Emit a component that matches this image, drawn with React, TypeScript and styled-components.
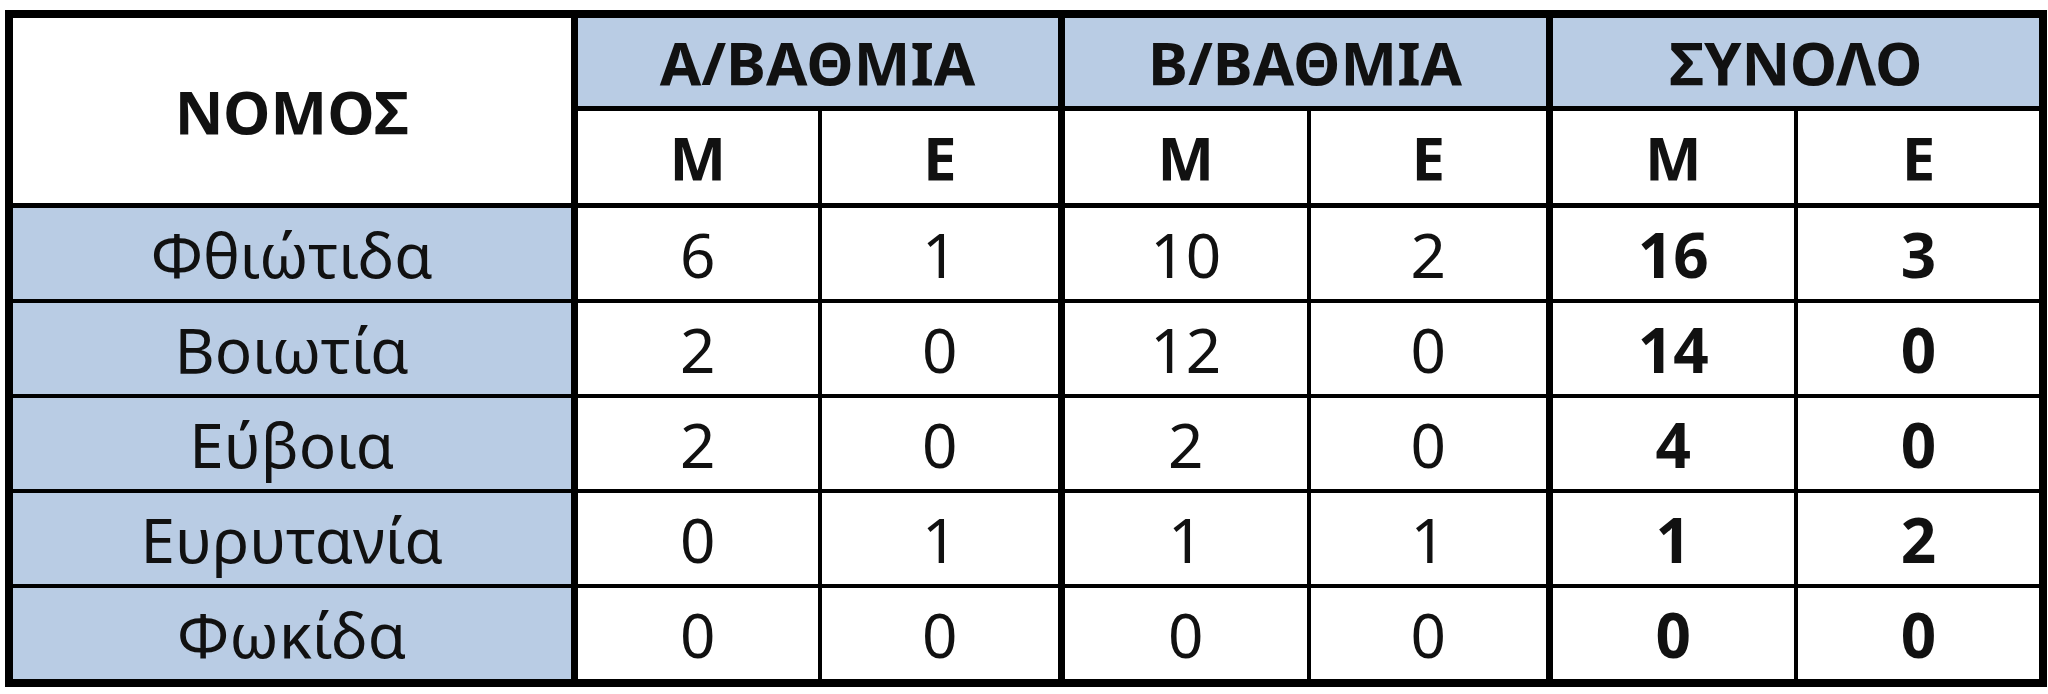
import React from 'react'
import styled, { createGlobalStyle } from 'styled-components'

const GlobalStyle = createGlobalStyle`
  html, body {
    margin: 0;
    padding: 0;
    background: #ffffff;
  }
  body {
    font-family: 'Noto Sans', 'Open Sans', 'DejaVu Sans', sans-serif;
    color: #111111;
  }
`

const Page = styled.div`
  padding: 10px 1px 6px 5px;
`

const Table = styled.table`
  width: 2042px;
  table-layout: fixed;
  border-collapse: collapse;
  border: 8px solid #000;
`

const Th = styled.th<{ $blue?: boolean; $thickLeft?: boolean; $h: number }>`
  height: ${(p) => p.$h}px;
  padding: 0;
  font-size: 60px;
  line-height: 1;
  font-weight: 700;
  text-align: center;
  vertical-align: middle;
  background: ${(p) => (p.$blue ? '#b9cce4' : '#ffffff')};
  border: 4px solid #000;
  border-left-width: ${(p) => (p.$thickLeft ? 7 : 3)}px;
  border-bottom-width: 5px;
`

const Td = styled.td<{ $blue?: boolean; $bold?: boolean; $thickLeft?: boolean }>`
  height: 91px;
  padding: 0;
  font-size: 62px;
  line-height: 1;
  font-weight: ${(p) => (p.$bold ? 700 : 400)};
  text-align: center;
  vertical-align: middle;
  background: ${(p) => (p.$blue ? '#b9cce4' : '#ffffff')};
  border: 4px solid #000;
  border-left-width: ${(p) => (p.$thickLeft ? 7 : 3)}px;
`

const rows = [
  { name: 'Φθιώτιδα', v: [6, 1, 10, 2, 16, 3] },
  { name: 'Βοιωτία', v: [2, 0, 12, 0, 14, 0] },
  { name: 'Εύβοια', v: [2, 0, 2, 0, 4, 0] },
  { name: 'Ευρυτανία', v: [0, 1, 1, 1, 1, 2] },
  { name: 'Φωκίδα', v: [0, 0, 0, 0, 0, 0] },
]

const widths = [565, 246, 241, 248, 240, 247, 247]
const groups = ['Α/ΒΑΘΜΙΑ', 'Β/ΒΑΘΜΙΑ', 'ΣΥΝΟΛΟ']

export default function App() {
  return (
    <Page>
      <GlobalStyle />
      <Table>
        <colgroup>
          {widths.map((w, i) => (
            <col key={i} style={{ width: w }} />
          ))}
        </colgroup>
        <thead>
          <tr>
            <Th rowSpan={2} $h={88}>
              ΝΟΜΟΣ
            </Th>
            {groups.map((g) => (
              <Th key={g} colSpan={2} $blue $thickLeft $h={88}>
                {g}
              </Th>
            ))}
          </tr>
          <tr>
            {groups.map((g) => (
              <React.Fragment key={g}>
                <Th $thickLeft $h={92}>
                  Μ
                </Th>
                <Th $h={92}>Ε</Th>
              </React.Fragment>
            ))}
          </tr>
        </thead>
        <tbody>
          {rows.map((r) => (
            <tr key={r.name}>
              <Td $blue>{r.name}</Td>
              {r.v.map((n, i) => (
                <Td key={i} $thickLeft={i % 2 === 0} $bold={i >= 4}>
                  {n}
                </Td>
              ))}
            </tr>
          ))}
        </tbody>
      </Table>
    </Page>
  )
}
